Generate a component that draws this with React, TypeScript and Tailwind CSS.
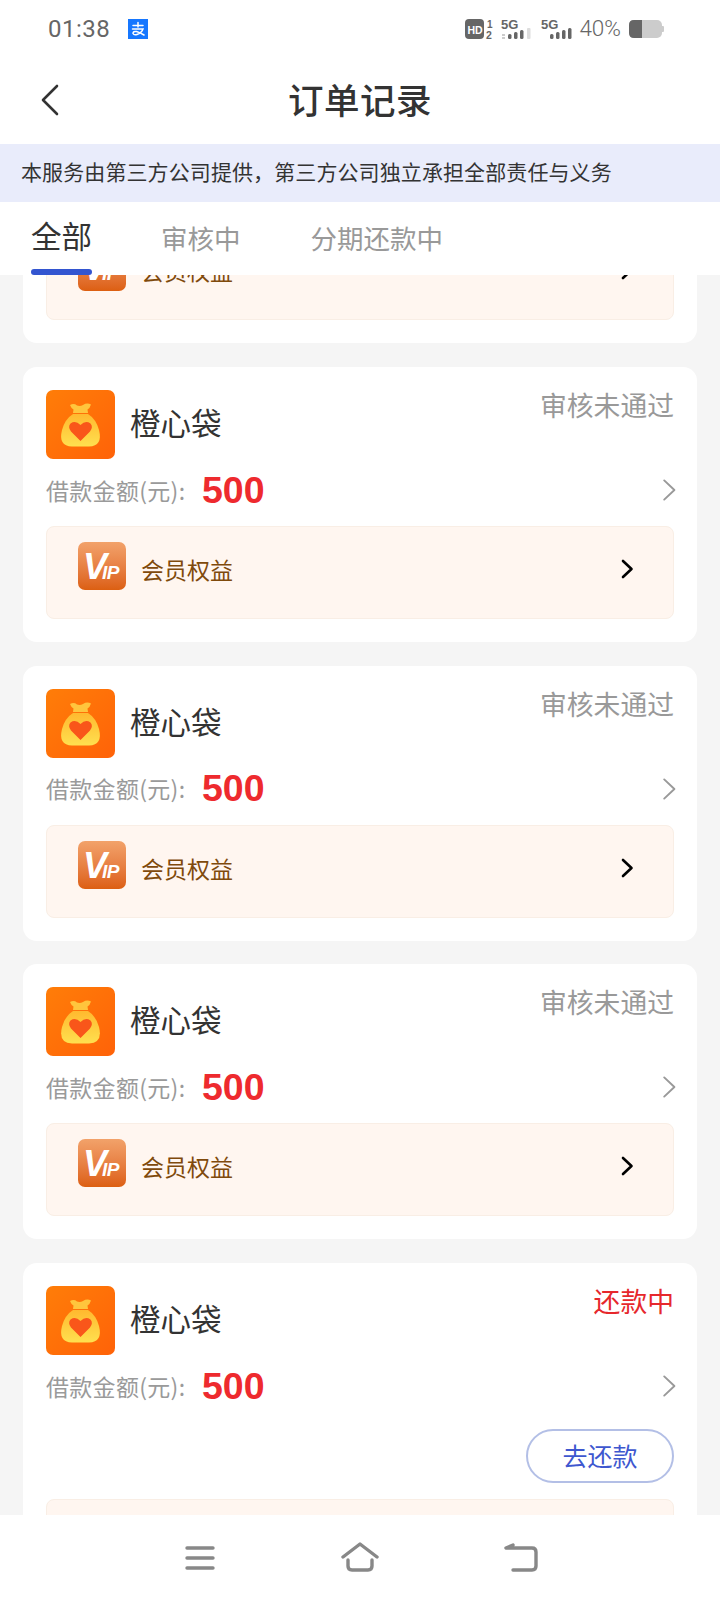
import React from 'react';

const cjk = { fontFamily: '"Noto Sans CJK SC", sans-serif' };

// Orange app logo: money bag with a heart
const BagLogo: React.FC = () => (
  <div className="w-[69px] h-[69px] rounded-[7px] bg-gradient-to-br from-[#ff7d08] to-[#ff6208] shrink-0">
    <svg width="69" height="69" viewBox="0 0 69 69">
      <defs>
        <linearGradient id="bagFill" x1="0" y1="0" x2="0" y2="1">
          <stop offset="0" stopColor="#ffb92f" />
          <stop offset="1" stopColor="#ffe04f" />
        </linearGradient>
      </defs>
      <path d="M24 15 Q28 13 31 15.5 Q34 16.5 37 15 Q41 12.5 45 14.5 Q44 18 41.5 19.5 L42 23 L27 23 L27.5 19.5 Q25 18 24 15 Z" fill="#ffc53d" />
      <path d="M27 24 L42 24 Q50 29 53 40 Q57 56 43 56.5 L26 56.5 Q12 56 16 40 Q19 29 27 24 Z" fill="url(#bagFill)" />
      <path d="M34.5 51 L25 41.5 Q21.5 37 24.5 33.5 Q29.5 30 34.5 35 Q39.5 30 44.5 33.5 Q47.5 37 44 41.5 Z" fill="#f9561a" />
    </svg>
  </div>
);

const VipLogo: React.FC = () => (
  <div className="w-[48px] h-[48px] rounded-[7px] bg-gradient-to-b from-[#f2a26a] to-[#dc5f10] shrink-0">
    <svg width="48" height="48" viewBox="0 0 48 48">
      <text x="5" y="37" fill="#fff" fontSize="36" fontWeight="700" fontStyle="italic" fontFamily="Liberation Sans">V</text>
      <text x="24" y="37" fill="#fff" fontSize="19" fontWeight="700" fontStyle="italic" fontFamily="Liberation Sans" letterSpacing="-0.5">IP</text>
    </svg>
  </div>
);

const Chevron: React.FC<{ size?: number; stroke?: string; width?: number }> = ({ size = 20, stroke = '#999', width = 1.6 }) => (
  <svg width={size} height={size} viewBox="0 0 20 20" fill="none">
    <path d="M6 2 L14.5 10 L6 18" stroke={stroke} strokeWidth={width} strokeLinecap="round" strokeLinejoin="round" />
  </svg>
);

const MemberBox: React.FC = () => (
  <div className="h-[93px] rounded-[8px] border border-[#f9eee5] bg-[#fff6f0] pl-[31px] pr-[36px] pt-[15px] flex items-start">
    <VipLogo />
    <span className="ml-[15px] mt-[11px] text-[23px] leading-[32px] text-[#7f4a0c]">会员权益</span>
    <div className="ml-auto mt-[17px]">
      <Chevron stroke="#000" width={2.6} />
    </div>
  </div>
);

interface OrderCardProps {
  status: string;
  statusClass: string;
  repay?: boolean;
}

const OrderCard: React.FC<OrderCardProps> = ({ status, statusClass, repay }) => (
  <div className="bg-white rounded-[14px] px-[23px] pt-[23px] pb-[23px] mb-[23.8px]">
    <div className="flex items-start">
      <BagLogo />
      <span className="ml-[15px] mt-[11px] text-[30.5px] leading-[42px] text-[#333]">橙心袋</span>
      <span className={`ml-auto -mt-[3px] text-[26.8px] leading-[36px] ${statusClass}`}>{status}</span>
    </div>
    <div className="flex items-center h-[50px] mt-[6px]">
      <span className="text-[23px] text-[#9a9a9a] w-[156px] tracking-[0.3px]">借款金额(元):</span>
      <span className="text-[37.5px] font-bold text-[#ee2a2e]" style={{ fontFamily: '"Liberation Sans", sans-serif' }}>500</span>
      <div className="ml-auto -mr-[7px]">
        <Chevron size={24} />
      </div>
    </div>
    {repay ? (
      <>
        <div className="flex justify-end mt-[18px]">
          <button className="w-[148px] h-[54px] rounded-full border-2 border-[#b3bfe6] text-[25px] text-[#3e57cf]">去还款</button>
        </div>
        <div className="mt-[16px]">
          <MemberBox />
        </div>
      </>
    ) : (
      <div className="mt-[11px]">
        <MemberBox />
      </div>
    )}
  </div>
);

export default function App() {
  return (
    <div className="w-[720px] h-[1600px] bg-[#f5f5f5] flex flex-col overflow-hidden" style={cjk}>
      {/* Status bar */}
      <div className="h-[57px] bg-white flex items-center pl-[48px] pr-[56px] shrink-0">
        <span className="text-[24px] text-[#666] tracking-[0.5px]" style={{ fontFamily: 'Roboto, sans-serif' }}>01:38</span>
        <svg width="20" height="20" viewBox="0 0 20 20" fill="none" stroke="#fff" strokeWidth="1.5" strokeLinecap="round" className="ml-[18px]">
          <rect width="20" height="20" fill="#1677ff" stroke="none" />
          <path d="M5 6.5 H15 M10 3.5 V8 M4.5 10 H15 Q13.5 14 9 15.5 Q6 16.5 5 14.5 Q5 12 8.5 12.5 Q12 13.5 16 16" />
        </svg>
        <div className="ml-auto flex items-center">
          <svg width="107" height="24" viewBox="0 0 107 24" fill="#666">
            <rect x="0" y="2" width="19" height="20" rx="4" />
            <text x="2.5" y="16.5" fontSize="10.5" fontWeight="700" fill="#fff" fontFamily="Liberation Sans">HD</text>
            <text x="22" y="11" fontSize="10" fontWeight="700" fontFamily="Liberation Sans">1</text>
            <text x="21" y="22" fontSize="10.5" fontWeight="700" fontFamily="Liberation Sans">2</text>
            <text x="36" y="12" fontSize="13" fontWeight="700" fontFamily="Liberation Sans">5G</text>
            <rect x="37" y="17" width="3" height="2" fill="#ccc" />
            <rect x="37" y="20" width="3" height="2" fill="#ccc" />
            <rect x="43" y="17" width="3.5" height="5" rx="1.5" />
            <rect x="49" y="15" width="3.5" height="7" rx="1.5" />
            <rect x="55" y="13" width="3.5" height="9" rx="1.5" />
            <rect x="62" y="11" width="3.5" height="11" rx="1" fill="#ddd" />
            <text x="76" y="12" fontSize="13" fontWeight="700" fontFamily="Liberation Sans">5G</text>
            <rect x="85" y="17" width="3.5" height="5" rx="1.5" />
            <rect x="91" y="15" width="3.5" height="7" rx="1.5" />
            <rect x="97" y="13" width="3.5" height="9" rx="1.5" />
            <rect x="103" y="11" width="3.5" height="11" rx="1.5" />
          </svg>
          <span className="ml-[7px] text-[22.5px] text-[#666]" style={{ fontFamily: 'Roboto, sans-serif', fontWeight: 300 }}>40%</span>
          <svg width="35" height="20" viewBox="0 0 35 20" className="ml-[8px]">
            <rect x="0" y="1" width="33" height="18" rx="5" fill="#ccc" />
            <path d="M5 1 H13 V19 H5 Q0 19 0 14 V6 Q0 1 5 1 Z" fill="#666" />
            <rect x="32" y="7" width="3" height="6" rx="1" fill="#ccc" />
          </svg>
        </div>
      </div>

      {/* Title bar */}
      <div className="h-[87px] bg-white relative flex items-center justify-center shrink-0">
        <svg width="20" height="32" viewBox="0 0 20 32" fill="none" className="absolute left-[40px] top-[27px]">
          <path d="M17 2 L3 16 L17 30" stroke="#333" strokeWidth="2.6" strokeLinecap="round" strokeLinejoin="round" />
        </svg>
        <span className="text-[35.5px] font-medium text-[#333] tracking-[0.5px] -mt-[4px]">订单记录</span>
      </div>

      {/* Notice */}
      <div className="h-[58px] bg-[#e9ecfb] flex items-center pl-[21px] shrink-0">
        <span className="text-[21px] tracking-[0.1px] text-[#333] -mt-[2px]">本服务由第三方公司提供，第三方公司独立承担全部责任与义务</span>
      </div>

      {/* Tabs */}
      <div className="h-[73px] bg-white flex items-start pl-[31px] shrink-0 relative z-10">
        <div className="relative h-full w-[61px]">
          <span className="block mt-[11px] text-[30.5px] leading-[44px] text-[#333]">全部</span>
          <div className="absolute left-0 bottom-0 w-[61px] h-[6px] rounded-full bg-[#3355d0]" />
        </div>
        <span className="ml-[69px] mt-[16px] text-[26.5px] leading-[40px] text-[#999]">审核中</span>
        <span className="ml-[70px] mt-[16px] text-[26.5px] leading-[40px] text-[#999]">分期还款中</span>
      </div>

      {/* Order list, scrolled part way */}
      <div className="flex-1 overflow-hidden px-[23px]">
        <div className="-mt-[207px]">
          <OrderCard status="审核未通过" statusClass="text-[#999]" />
          <OrderCard status="审核未通过" statusClass="text-[#999]" />
          <OrderCard status="审核未通过" statusClass="text-[#999]" />
          <OrderCard status="审核未通过" statusClass="text-[#999]" />
          <OrderCard status="还款中" statusClass="text-[#e6282c]" repay />
        </div>
      </div>

      {/* Bottom nav */}
      <div className="h-[85px] bg-white flex items-start pl-[185px] pt-[27px] shrink-0">
        <svg width="30" height="26" viewBox="0 0 30 26" fill="none" stroke="#888" strokeWidth="3.4" strokeLinecap="round" className="mt-[3px]">
          <path d="M2 3 H28 M2 13 H28 M2 23 H28" />
        </svg>
        <svg width="38" height="30" viewBox="0 0 38 30" fill="none" stroke="#888" strokeWidth="3.4" strokeLinecap="round" strokeLinejoin="round" className="ml-[126px]">
          <path d="M2 15 L19 2 L36 15 M7 18 V24 Q7 28 11 28 H27 Q31 28 31 24 V18" />
        </svg>
        <svg width="34" height="30" viewBox="0 0 34 30" fill="none" stroke="#888" strokeWidth="3.4" strokeLinecap="round" strokeLinejoin="round" className="ml-[125px]">
          <path d="M2 6 H28 Q32 6 32 10 V24 Q32 28 28 28 H9 M2 6 L9 3" />
        </svg>
      </div>
    </div>
  );
}
